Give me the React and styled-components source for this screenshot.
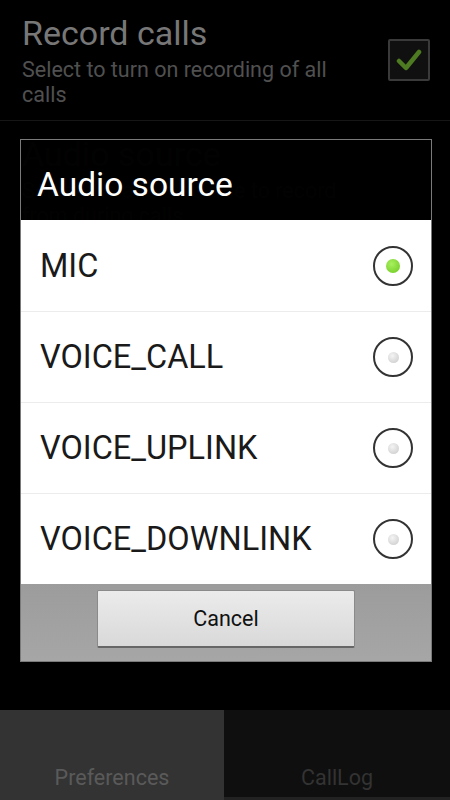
import React from 'react';
import styled, { createGlobalStyle } from 'styled-components';

const Global = createGlobalStyle`
  html, body { margin: 0; padding: 0; background: #000; }
  body { font-family: Roboto, "Noto Sans", "Liberation Sans", sans-serif; }
  * { box-sizing: border-box; }
`;

const Screen = styled.div`
  position: relative;
  width: 450px;
  height: 800px;
  background: #000;
  display: flex;
  flex-direction: column;
  overflow: hidden;
`;

const PrefList = styled.div`
  flex: 1;
  display: flex;
  flex-direction: column;
`;

const PrefRow = styled.div`
  display: flex;
  align-items: center;
  padding: 13px 20px 13px 22px;
  border-bottom: ${p => (p.$divider ? '1px solid #161616' : 'none')};
`;

const PrefText = styled.div`
  flex: 1;
  display: flex;
  flex-direction: column;
`;

const PrefTitle = styled.div`
  font-size: 34px;
  line-height: 40px;
  color: ${p => p.$dim ? '#1c1c1c' : '#777'};
`;

const PrefSummary = styled.div`
  font-size: 21.5px;
  line-height: 25px;
  margin-top: 4px;
  color: ${p => p.$dim ? '#1c1c1c' : '#505050'};
  width: 330px;
`;

const Check = styled.div`
  width: 42px;
  height: 42px;
  border: 2px solid #3a3a3a;
  border-radius: 2px;
  background: #101010;
  display: flex;
  align-items: center;
  justify-content: center;
`;

const TabBar = styled.div`
  height: 90px;
  display: flex;
`;

const Tab = styled.div`
  flex: ${p => (p.$active ? '0 0 224px' : '1')};
  background: ${p => (p.$active ? '#333' : '#0f0f0f')};
  color: ${p => (p.$active ? '#5a5a5a' : '#333')};
  font-size: 21.5px;
  display: flex;
  align-items: flex-end;
  justify-content: center;
  padding-bottom: 7px;
  border-bottom: 3px solid ${p => (p.$active ? '#333' : '#222')};
`;

const Dialog = styled.div`
  position: absolute;
  left: 20px;
  top: 139px;
  width: 412px;
  border: 1px solid #7a7a7a;
  display: flex;
  flex-direction: column;
`;

const DialogTitle = styled.div`
  height: 80px;
  background: rgba(0, 0, 0, 0.9);
  color: #fff;
  font-size: 33.5px;
  display: flex;
  align-items: center;
  padding: 8px 0 0 16px;
`;

const Options = styled.div`
  background: #fff;
  display: flex;
  flex-direction: column;
`;

const Option = styled.div`
  height: 91px;
  display: flex;
  align-items: center;
  justify-content: space-between;
  padding: 0 18px 0 19px;
  border-top: ${p => (p.$first ? 'none' : '1px solid #ececec')};
  font-size: 32.5px;
  color: #1a1a1a;
`;

const Radio = styled.div`
  width: 40px;
  height: 40px;
  border-radius: 50%;
  border: 2px solid #333;
  display: flex;
  align-items: center;
  justify-content: center;
`;

const Dot = styled.div`
  width: ${p => (p.$on ? '14px' : '11px')};
  height: ${p => (p.$on ? '14px' : '11px')};
  border-radius: 50%;
  background: ${p => p.$on
    ? 'radial-gradient(circle at 40% 35%, #a8f060, #6cc81c)'
    : 'radial-gradient(circle at 40% 35%, #f4f4f4, #c8c8c8)'};
`;

const ButtonBar = styled.div`
  height: 77px;
  background: linear-gradient(#9c9c9c, #a6a6a6);
  display: flex;
  justify-content: center;
  padding-top: 6px;
`;

const CancelButton = styled.div`
  width: 258px;
  height: 58px;
  background: linear-gradient(#ebebeb, #d9d9d9);
  border: 1px solid #8a8a8a;
  border-bottom: 2px solid #666;
  border-radius: 2px;
  display: flex;
  align-items: center;
  justify-content: center;
  font-size: 21.5px;
  color: #111;
`;

const options = ['MIC', 'VOICE_CALL', 'VOICE_UPLINK', 'VOICE_DOWNLINK'];

export default function App() {
  return (
    <Screen>
      <Global />
      <PrefList>
        <PrefRow $divider>
          <PrefText>
            <PrefTitle>Record calls</PrefTitle>
            <PrefSummary>Select to turn on recording of all calls</PrefSummary>
          </PrefText>
          <Check>
            <svg width="26" height="22" viewBox="0 0 26 22">
              <path d="M3 12 L10 19 L23 3" fill="none" stroke="#4e7a22" strokeWidth="4.5" strokeLinecap="round" strokeLinejoin="round" />
            </svg>
          </Check>
        </PrefRow>
        <PrefRow>
          <PrefText>
            <PrefTitle $dim>Audio source</PrefTitle>
            <PrefSummary $dim>Select the audio source to record from during calls</PrefSummary>
          </PrefText>
        </PrefRow>
      </PrefList>
      <TabBar>
        <Tab $active>Preferences</Tab>
        <Tab>CallLog</Tab>
      </TabBar>

      <Dialog>
        <DialogTitle>Audio source</DialogTitle>
        <Options>
          {options.map((o, i) => (
            <Option key={o} $first={i === 0}>
              {o}
              <Radio><Dot $on={i === 0} /></Radio>
            </Option>
          ))}
        </Options>
        <ButtonBar>
          <CancelButton>Cancel</CancelButton>
        </ButtonBar>
      </Dialog>
    </Screen>
  );
}
